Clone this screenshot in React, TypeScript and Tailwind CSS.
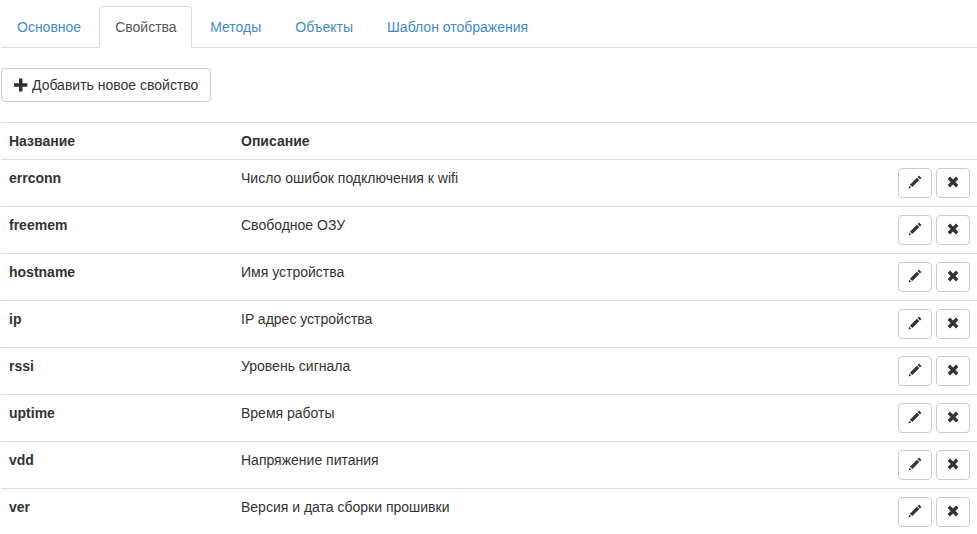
import React from 'react';

const tabs = ['Основное', 'Свойства', 'Методы', 'Объекты', 'Шаблон отображения'];

const rows = [
  { name: 'errconn', desc: 'Число ошибок подключения к wifi' },
  { name: 'freemem', desc: 'Свободное ОЗУ' },
  { name: 'hostname', desc: 'Имя устройства' },
  { name: 'ip', desc: 'IP адрес устройства' },
  { name: 'rssi', desc: 'Уровень сигнала' },
  { name: 'uptime', desc: 'Время работы' },
  { name: 'vdd', desc: 'Напряжение питания' },
  { name: 'ver', desc: 'Версия и дата сборки прошивки' },
];

function PlusIcon() {
  return (
    <svg className="w-[14px] h-[14px] text-[#333]" viewBox="0 0 14 14" fill="currentColor">
      <path d="M5 0.5h3.5v4.7h4.9v3.6H8.5v4.7H5V8.8H0V5.2h5z" />
    </svg>
  );
}

function PencilIcon() {
  return (
    <svg className="w-[14px] h-[14px] text-[#333]" viewBox="0 0 14 14" fill="currentColor">
      <path d="M11 0.6l2.4 2.4-1.4 1.4-2.4-2.4zM8.9 2.7l2.4 2.4-7 7-2.4-2.4zM1.4 10.7l1.9 1.9-2.8.9z" />
    </svg>
  );
}

function RemoveIcon() {
  return (
    <svg className="w-[14px] h-[14px] text-[#333]" viewBox="0 0 14 14" fill="currentColor">
      <path d="M4 1.6L7 4.6l3-3 2.4 2.4-3 3 3 3-2.4 2.4-3-3-3 3-2.4-2.4 3-3-3-3z" />
    </svg>
  );
}

function IconButton({ children }: { children: React.ReactNode }) {
  return (
    <button className="w-[34px] h-[30px] flex items-center justify-center pb-[2px] bg-white border border-[#ccc] rounded">
      {children}
    </button>
  );
}

export default function App() {
  return (
    <div className="min-h-screen bg-white pl-px pt-[6px] text-[14px] leading-[20px] text-[#333] overflow-hidden font-['Liberation_Sans',Arial,sans-serif]">
      {/* Tabs */}
      <ul className="flex gap-[2px] h-[42px] border-b border-[#ddd]">
        {tabs.map((tab, i) =>
          i === 1 ? (
            <li key={tab} className="w-[93px] h-[42px] px-[15px] py-[10px] bg-white border border-[#ddd] border-b-white rounded-t text-[#555]">
              {tab}
            </li>
          ) : (
            <li key={tab} className="h-[42px] px-[16px] py-[11px] text-[#428bca]">
              {tab}
            </li>
          )
        )}
      </ul>

      <button className="mt-[20px] h-[34px] w-[210px] flex items-center gap-[4px] pl-[12px] bg-white border border-[#ccc] rounded">
        <PlusIcon />
        <span>Добавить новое свойство</span>
      </button>

      {/* Table */}
      <div className="mt-[20px] w-[976px]">
        <div className="grid grid-cols-[232px_1fr] h-[38px] border-y border-[#ddd] font-bold px-[8px] pt-[8px]">
          <div>Название</div>
          <div>Описание</div>
        </div>
        {rows.map((row) => (
          <div key={row.name} className="grid grid-cols-[232px_1fr_auto] h-[47px] border-b border-[#ddd] pl-[8px] pr-[7px] pt-[8px]">
            <div className="font-bold">{row.name}</div>
            <div>{row.desc}</div>
            <div className="flex gap-[4px]">
              <IconButton><PencilIcon /></IconButton>
              <IconButton><RemoveIcon /></IconButton>
            </div>
          </div>
        ))}
      </div>
    </div>
  );
}
